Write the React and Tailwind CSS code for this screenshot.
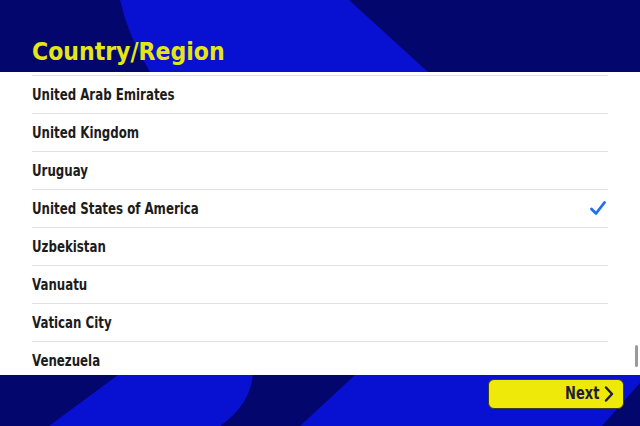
import React from "react";

const countries = [
  "United Arab Emirates",
  "United Kingdom",
  "Uruguay",
  "United States of America",
  "Uzbekistan",
  "Vanuatu",
  "Vatican City",
  "Venezuela",
];

const selected = "United States of America";

function HeaderArt() {
  return (
    <svg className="absolute inset-0" width="640" height="72" viewBox="0 0 640 72" preserveAspectRatio="none">
      <rect width="640" height="72" fill="#03066c" />
      <path d="M120 0 L349 0 L428 72 L150 72 Q128 36 120 0 Z" fill="#0811d2" />
    </svg>
  );
}

function FooterArt() {
  return (
    <svg className="absolute inset-0" width="640" height="51" viewBox="0 0 640 51" preserveAspectRatio="none">
      <rect width="640" height="51" fill="#03066c" />
      <path d="M118 0 L253 0 Q250 30 220 51 L49 51 Z" fill="#0811d2" />
      <path d="M355 0 L640 0 L640 8 L602 51 L300 51 Z" fill="#0811d2" />
    </svg>
  );
}

export default function App() {
  return (
    <div className="w-[640px] h-[426px] flex flex-col overflow-hidden bg-white font-['DejaVu_Sans_Condensed',sans-serif]">
      <div className="relative h-[72px] shrink-0">
        <HeaderArt />
        <h1 className="relative pl-[32px] pt-[37px] text-[25px] leading-[30px] font-bold text-[#e6e614]">
          <span className="inline-block origin-left scale-x-[0.98]">Country/Region</span>
        </h1>
      </div>

      <div className="relative flex-1 overflow-hidden">
        <ul className="mx-[32px] w-[576px] pt-[3px]">
          {countries.map((c) => (
            <li key={c} className="flex h-[38px] items-center justify-between border-t border-[#e2e2e2] text-[16px] font-bold text-[#1c1c1c]">
              <span className="inline-block origin-left scale-x-[0.82] pt-[1px]">{c}</span>
              {c === selected && (
                <svg width="16" height="15" viewBox="0 0 16 15" className="mr-[2px]">
                  <path d="M1.5 8 L6 12.5 L14.5 1.5" fill="none" stroke="#1f6ff0" strokeWidth="2.8" strokeLinecap="round" strokeLinejoin="round" />
                </svg>
              )}
            </li>
          ))}
        </ul>
        <div className="absolute right-[2px] top-[273px] h-[22px] w-[3px] rounded bg-[#9a9a9a]" />
      </div>

      <div className="relative h-[51px] shrink-0">
        <FooterArt />
        <div className="relative flex justify-end pr-[16px] pt-[4px]">
          <button className="flex h-[30px] w-[136px] items-center justify-end gap-[5px] rounded-[6px] border border-[#3a3a20] bg-[#efe90a] pr-[9px] text-[17px] font-bold text-[#1e1e3c]">
            <span className="inline-block origin-right scale-x-[0.85]">Next</span>
            <svg width="10" height="16" viewBox="0 0 10 16">
              <path d="M2 1.5 L8 8 L2 14.5" fill="none" stroke="#1e1e3c" strokeWidth="2.4" strokeLinecap="round" strokeLinejoin="round" />
            </svg>
          </button>
        </div>
      </div>
    </div>
  );
}
